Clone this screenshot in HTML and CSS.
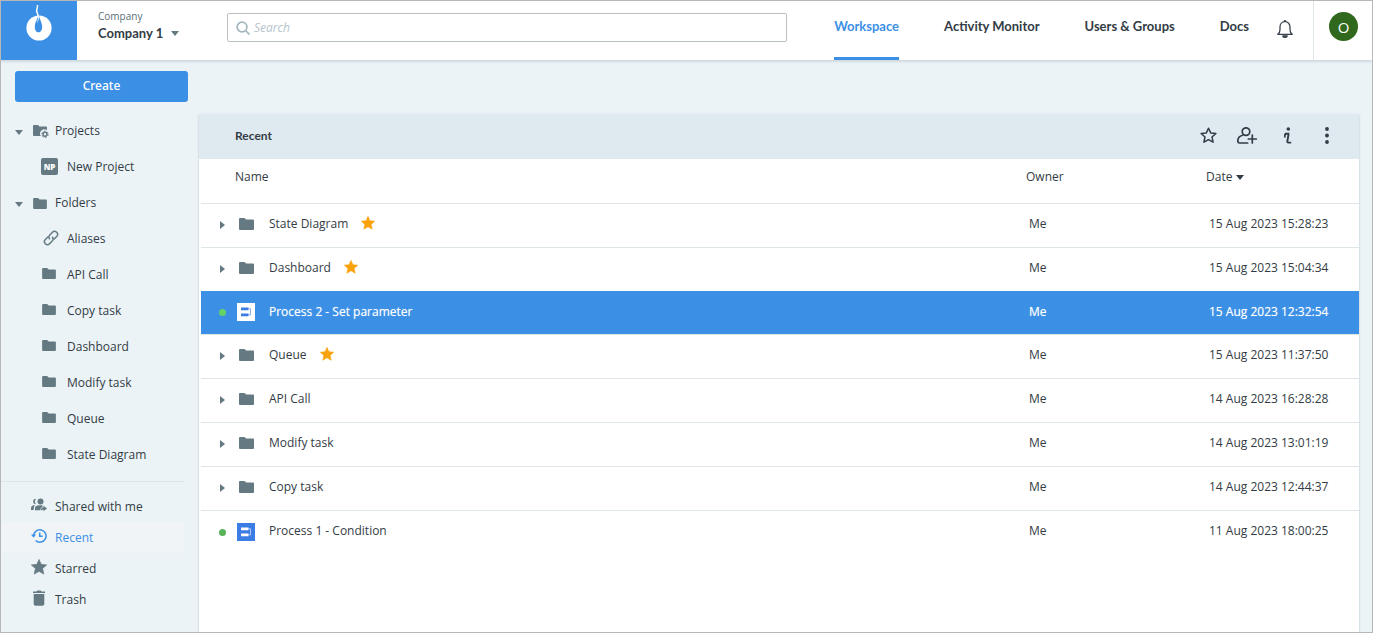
FILE: index.html
```
<!DOCTYPE html>
<html lang="en">
<head>
<meta charset="utf-8">
<title>Workspace</title>
<link rel="stylesheet" href="styles.css">
</head>
<body>
<svg class="sprite" aria-hidden="true">
  <symbol id="folder" viewBox="0 0 15 12"><path d="M1 0h4.500l1.600 1.600H14a1 1 0 0 1 1 1V11a1 1 0 0 1-1 1H1a1 1 0 0 1-1-1V1a1 1 0 0 1 1-1z" fill="currentColor"/></symbol>
  <symbol id="down" viewBox="0 0 8 5"><path d="M0 0h8L4 5z" fill="currentColor"/></symbol>
  <symbol id="right" viewBox="0 0 5 8"><path d="M0 0v8l5-4z" fill="currentColor"/></symbol>
  <symbol id="star" viewBox="0 0 14 14"><path d="M7 .4l1.900 4.300 4.800.5-3.600 3.200 1.100 4.800L7 10.800l-4.200 2.400 1.100-4.800L.3 5.200l4.800-.5z" fill="currentColor" stroke="currentColor" stroke-width=".6" stroke-linejoin="round"/></symbol>
  <symbol id="process" viewBox="0 0 10 10"><path d="M0 .6h7.500v2.600H0zM0 6.600h7.500v2.600H0z" fill="currentColor"/><path d="M7.500 1.700h2v6.200h-2" fill="none" stroke="currentColor" stroke-width="1" opacity=".6"/></symbol>
</svg>

<header class="topbar">
  <a class="logo" href="#" aria-label="Home">
    <svg width="28" height="36" viewBox="0 0 28 36"><circle cx="14" cy="23" r="12.600" fill="#fff"/><path d="M13 10c-.2 4-3.200 7-3.200 12 0 3 1.500 5.300 3.700 5.300s3.700-2.200 3.700-5.300c0-4.600-3-8-3.200-12z" fill="#3b90e6"/><path d="M12.300 0c.9 2.200-.9 3.800-.6 6.100.2 2 1.700 2.700 1.500 6.400" fill="none" stroke="#fff" stroke-width="1.500"/><path d="M12.800 11.500c.3 3-.2 4.500-.8 6.500 1.600-2 1.900-4 1.800-6.800z" fill="#fff"/></svg>
  </a>
  <button class="company" type="button">
    <span class="company-label">Company</span>
    <span class="company-name">Company 1 <svg width="8" height="5"><use href="#down"/></svg></span>
  </button>
  <label class="search">
    <svg width="14" height="14" viewBox="0 0 14 14" fill="none" stroke="#a3b5bf" stroke-width="1.700"><circle cx="6" cy="6" r="4.900"/><path d="M9.500 9.500l4 4"/></svg>
    <input type="search" placeholder="Search" aria-label="Search">
  </label>
  <nav class="nav">
    <a class="active" href="#">Workspace</a>
    <a href="#">Activity Monitor</a>
    <a href="#">Users &amp; Groups</a>
    <a href="#">Docs</a>
  </nav>
  <button class="bell" type="button" aria-label="Notifications">
    <svg width="16" height="18" viewBox="0 0 16 18" fill="none" stroke="#3a434b" stroke-width="1.300" stroke-linejoin="round"><path d="M7 1.800C7 .4 9 .4 9 1.800M.8 14.400h14.400c-1.700-1.200-2.200-2.200-2.200-4.800V7c0-3-2-5.300-5-5.300S3 4 3 7v2.600c0 2.600-.5 3.600-2.200 4.800z"/><path d="M5.800 16c.4 1.800 4 1.800 4.400 0z"/></svg>
  </button>
  <div class="account"><button class="avatar" type="button">O</button></div>
</header>

<div class="layout">
  <aside class="sidebar">
    <button class="create" type="button">Create</button>
    <ul class="tree">
      <li><a class="root" href="#"><svg class="caret" width="8" height="5"><use href="#down"/></svg><svg width="16" height="13" viewBox="0 0 16 13"><path d="M1 0h4l1.500 1.600H13a1 1 0 0 1 1 1V5.200A4.300 4.300 0 0 0 7.800 11H1a1 1 0 0 1-1-1V1a1 1 0 0 1 1-1z" fill="#647982"/><circle cx="12" cy="9.300" r="2" fill="none" stroke="#647982" stroke-width="1.500"/><circle cx="12" cy="9.300" r="3.200" fill="none" stroke="#647982" stroke-width="1" stroke-dasharray="1.700 1.650"/></svg>Projects</a></li>
      <li><a class="leaf" href="#"><span class="badge">NP</span>New Project</a></li>
      <li><a class="root" href="#"><svg class="caret" width="8" height="5"><use href="#down"/></svg><svg class="small-folder" width="14" height="11"><use href="#folder"/></svg>Folders</a></li>
      <li><a class="leaf" href="#"><svg class="link-icon" width="18" height="16" viewBox="0 0 18 16" fill="none" stroke="#647982" stroke-width="1.500" stroke-linecap="round"><g transform="rotate(-45 9 8)"><path d="M7.500 5H4a3 3 0 0 0 0 6h3.700a3 3 0 0 0 2.900-2.500"/><path d="M10.500 11H14a3 3 0 0 0 0-6h-3.700a3 3 0 0 0-2.900 2.500"/></g></svg>Aliases</a></li>
      <li><a class="leaf" href="#"><svg class="raised" width="14" height="11"><use href="#folder"/></svg>API Call</a></li>
      <li><a class="leaf" href="#"><svg class="raised" width="14" height="11"><use href="#folder"/></svg>Copy task</a></li>
      <li><a class="leaf" href="#"><svg class="raised" width="14" height="11"><use href="#folder"/></svg>Dashboard</a></li>
      <li><a class="leaf" href="#"><svg class="raised" width="14" height="11"><use href="#folder"/></svg>Modify task</a></li>
      <li><a class="leaf" href="#"><svg class="raised" width="14" height="11"><use href="#folder"/></svg>Queue</a></li>
      <li><a class="leaf" href="#"><svg class="raised" width="14" height="11"><use href="#folder"/></svg>State Diagram</a></li>
    </ul>
    <ul class="shortcuts">
      <li><a href="#"><svg width="16" height="16" viewBox="0 0 16 16" fill="#647982"><circle cx="9.500" cy="4.500" r="3"/><path d="M5 1.700a2.800 2.800 0 0 0 0 5.600A4.600 4.600 0 0 1 5 1.700zM0 13V11c0-1.500 1.500-2.700 4-2.900-.9.900-1.200 2-1.200 4.900zM4 13.300V11c0-2 2.500-2.800 5.300-2.800 1.500 0 2.500.2 3.300.7-1.700.6-3 2.100-3.400 4.400z"/><path d="M12.500 8.800L16 11.500l-3.500 2.700v-1.500c-1.200 0-2 .3-2.700 1 .2-2 1.100-3.200 2.700-3.400z"/></svg>Shared with me</a></li>
      <li><a class="current" href="#"><svg width="16" height="16" viewBox="0 0 16 16" fill="none" stroke="#3b90e6" stroke-width="1.500"><path d="M2.600 8a6.200 6.200 0 1 1 2 4.500"/><path d="M8.700 4.500V8.300h3"/><path d="M0 6.500h5L2.600 9.700z" fill="#3b90e6" stroke="none"/></svg>Recent</a></li>
      <li><a href="#"><svg class="gray" width="16" height="16"><use href="#star"/></svg>Starred</a></li>
      <li><a href="#"><svg width="16" height="16" viewBox="0 0 16 16" fill="#647982"><path d="M2 1.500h3.500L6.300.5h3.400l.8 1H14v1.400H2zM2.700 4h10.600v10a1.800 1.800 0 0 1-1.800 1.800h-7A1.800 1.800 0 0 1 2.700 14z"/></svg>Trash</a></li>
    </ul>
  </aside>

  <main class="panel">
    <div class="panel-head">
      <h1>Recent</h1>
      <div class="tools">
        <button type="button" aria-label="Star"><svg width="17" height="17" viewBox="0 0 17 17" fill="none" stroke="#333c45" stroke-width="1.500" stroke-linejoin="round"><path d="M8.500 1.200l2.200 4.700 5.200.6-3.900 3.500 1.100 5.200-4.600-2.600-4.600 2.600L5 10 1.100 6.500l5.200-.6z"/></svg></button>
        <button type="button" aria-label="Share"><svg width="20" height="17" viewBox="0 0 20 17" fill="none" stroke="#333c45" stroke-width="1.700" stroke-linecap="round" stroke-linejoin="round"><circle cx="9" cy="4.600" r="3.800"/><path d="M5.500 8.300C2.500 9.200.8 11.500.8 14c0 1.300.5 2 1.700 2h8.200M11.300 12h8M15.300 8v8"/></svg></button>
        <button type="button" aria-label="Info"><svg width="8" height="17" viewBox="0 0 8 17" fill="none" stroke="#333c45" stroke-width="1.900"><circle cx="4.300" cy="2" r="1.800" fill="#333c45" stroke="none"/><path d="M.8 6.800h3.600v1.400L3.400 14c-.2 1.200.2 1.600 1 1.600H7.200M.5 10.500L1.200 7"/></svg></button>
        <button type="button" aria-label="More"><svg width="4" height="17" viewBox="0 0 4 17" fill="#333c45"><circle cx="2" cy="2" r="1.900"/><circle cx="2" cy="8.500" r="1.900"/><circle cx="2" cy="15" r="1.900"/></svg></button>
      </div>
    </div>
    <table>
      <colgroup><col><col class="col-owner"><col class="col-date"></colgroup>
      <thead><tr><th>Name</th><th>Owner</th><th>Date <svg width="8" height="5"><use href="#down"/></svg></th></tr></thead>
      <tbody>
        <tr><td><div class="name"><svg class="toggle" width="5" height="8"><use href="#right"/></svg><svg class="kind" width="15" height="12"><use href="#folder"/></svg><span>State Diagram</span><svg class="fav" width="14" height="14"><use href="#star"/></svg></div></td><td>Me</td><td>15 Aug 2023 15:28:23</td></tr>
        <tr class="above-selected"><td><div class="name"><svg class="toggle" width="5" height="8"><use href="#right"/></svg><svg class="kind" width="15" height="12"><use href="#folder"/></svg><span>Dashboard</span><svg class="fav" width="14" height="14"><use href="#star"/></svg></div></td><td>Me</td><td>15 Aug 2023 15:04:34</td></tr>
        <tr class="selected"><td><div class="name"><i class="dot"></i><span class="proc"><svg width="10" height="10"><use href="#process"/></svg></span><span>Process 2 - Set parameter</span></div></td><td>Me</td><td>15 Aug 2023 12:32:54</td></tr>
        <tr><td><div class="name"><svg class="toggle" width="5" height="8"><use href="#right"/></svg><svg class="kind" width="15" height="12"><use href="#folder"/></svg><span>Queue</span><svg class="fav" width="14" height="14"><use href="#star"/></svg></div></td><td>Me</td><td>15 Aug 2023 11:37:50</td></tr>
        <tr><td><div class="name"><svg class="toggle" width="5" height="8"><use href="#right"/></svg><svg class="kind" width="15" height="12"><use href="#folder"/></svg><span>API Call</span></div></td><td>Me</td><td>14 Aug 2023 16:28:28</td></tr>
        <tr><td><div class="name"><svg class="toggle" width="5" height="8"><use href="#right"/></svg><svg class="kind" width="15" height="12"><use href="#folder"/></svg><span>Modify task</span></div></td><td>Me</td><td>14 Aug 2023 13:01:19</td></tr>
        <tr><td><div class="name"><svg class="toggle" width="5" height="8"><use href="#right"/></svg><svg class="kind" width="15" height="12"><use href="#folder"/></svg><span>Copy task</span></div></td><td>Me</td><td>14 Aug 2023 12:44:37</td></tr>
        <tr><td><div class="name"><i class="dot"></i><span class="proc"><svg width="10" height="10"><use href="#process"/></svg></span><span>Process 1 - Condition</span></div></td><td>Me</td><td>11 Aug 2023 18:00:25</td></tr>
      </tbody>
    </table>
  </main>
</div>
</body>
</html>
```
FILE: styles.css
```
* { box-sizing: border-box; }
body {
  margin: 0;
  min-height: 100vh;
  display: flex;
  flex-direction: column;
  border: 1px solid #b7b7b7;
  background: #ebf3f7;
  color: #333c45;
  font: 12px/16px "Open Sans", "Noto Sans", sans-serif;
}
button { font: inherit; color: inherit; border: 0; background: none; padding: 0; cursor: pointer; }
a { color: inherit; text-decoration: none; }
ul { list-style: none; margin: 0; padding: 0; }
svg { display: block; flex: none; }
.sprite { position: absolute; width: 0; height: 0; }

.topbar {
  display: flex;
  height: 59px;
  background: #fff;
  box-shadow: 0 1px 3px rgba(60, 80, 90, .25);
  z-index: 1;
}
.logo { width: 76px; flex: none; background: #3b90e6; display: flex; justify-content: center; padding-top: 4px; }
.company { width: 150px; padding: 7px 0 0 21px; display: flex; flex-direction: column; text-align: left; flex: none; }
.company-label { font-size: 10px; color: #5b6f79; }
.company-name { display: flex; align-items: center; gap: 8px; font: 700 13px/18px Lato, sans-serif; }
.company-name svg { color: #647982; }
.search {
  width: 560px;
  height: 29px;
  margin-top: 12px;
  padding: 0 8px;
  display: flex;
  align-items: center;
  gap: 4px;
  border: 1px solid #b9c0c4;
  border-radius: 2px;
}
.search input { flex: 1; min-width: 0; border: 0; outline: 0; background: none; padding: 0; font: inherit; }
.search input::placeholder { color: #b6c4cc; font-style: italic; }
.nav { display: flex; gap: 45px; margin-left: auto; font: 700 13px/18px Lato, sans-serif; white-space: nowrap; }
.nav a { padding-top: 16px; border-bottom: 3px solid transparent; }
.nav .active { color: #3b90e6; border-color: #3b90e6; }
.bell { margin: 0 20px 4px 28px; }
.account { width: 59px; flex: none; border-left: 1px solid #dfe6e9; padding: 11px 0 0 15px; }
.avatar { width: 29px; height: 29px; border-radius: 50%; background: #30691e; color: #fff; font-size: 15px; }

.layout { flex: 1; display: flex; }
.sidebar { width: 197px; flex: none; }
.create { display: block; width: 173px; height: 31px; margin: 11px 0 11px 14px; padding-bottom: 1px; background: #3b90e6; color: #fff; border-radius: 3px; font-family: "Noto Sans", sans-serif; font-weight: 500; }
.tree a { display: flex; align-items: center; height: 36px; }
.root { padding-left: 14px; }
.root svg + svg { margin: 0 6px 0 10px; color: #647982; }
.root svg.small-folder { margin-right: 8px; }
.caret { color: #647982; margin-top: 3px; }
.leaf { padding-left: 41px; color: #333c45; }
.leaf svg { color: #647982; margin-right: 11px; }
.leaf .raised { margin-bottom: 4px; }
.leaf .link-icon { margin-right: 7px; margin-bottom: 3px; }
.badge { width: 17px; height: 17px; margin: 0 9px 2px -1px; border-radius: 2px; background: #647982; color: #fff; font-size: 8px; line-height: 17px; font-weight: 800; text-align: center; }
.shortcuts { width: 183px; margin-top: 8px; padding-top: 9px; border-top: 1px solid #dde6ea; }
.shortcuts a { display: flex; align-items: center; gap: 8px; height: 31px; padding-left: 30px; }
.shortcuts svg { margin-bottom: 3px; }
.shortcuts .current { color: #3b90e6; background: #f0f4f7; }
.gray { color: #647982; }

.panel { flex: 1; min-width: 0; margin: 54px 13px 0 1px; background: #fff; box-shadow: 0 1px 2px rgba(60, 80, 90, .3); }
.panel-head { display: flex; align-items: center; justify-content: space-between; height: 45px; padding: 0 30px 2px 36px; background: #dfeaf0; }
h1 { margin: 0; font: 700 12px/16px Lato, sans-serif; }
.tools { display: flex; align-items: center; }
.tools button + button { margin-left: 20px; }
.tools button:nth-child(3) { margin-left: 27px; }
.tools button:nth-child(4) { margin-left: 33px; }
table { width: calc(100% - 2px); margin-left: 2px; table-layout: fixed; border-collapse: separate; border-spacing: 0; }
.col-owner { width: 180px; }
.col-date { width: 153px; }
th, td { height: 44px; padding: 0 0 4px; border-bottom: 1px solid #dfe6ea; text-align: left; font-weight: 400; white-space: nowrap; }
th { height: 45px; padding-bottom: 8px; }
th:first-child { padding-left: 34px; }
th svg { display: inline-block; vertical-align: middle; }
td + td { padding-left: 3px; }
tbody tr:last-child td { border: 0; }
.name { display: flex; align-items: center; padding-left: 19px; height: 18px; }
.toggle { margin: 2px 14px 0 0; color: #647982; }
.kind { margin: 0 15px 0 0; color: #647982; }
.fav { margin: 0 0 2px 13px; color: #f9a20b; }
.dot { width: 7px; height: 7px; margin: 2px 11px 0 -1px; border-radius: 50%; background: #58b258; }
.proc { display: flex; width: 18px; height: 18px; margin: 1px 14px 0 0; padding: 4px; background: #3c7ce5; color: #fff; flex: none; }
.above-selected td { height: 43px; border: 0; padding-bottom: 3px; }
.selected td { padding-bottom: 2px; background: #3b90e6; color: #fff; text-shadow: 0 0 1px rgba(255, 255, 255, .5); }
.selected .dot { background: #65d266; }
.selected .proc { background: #fff; color: #3c7ce5; }
```
